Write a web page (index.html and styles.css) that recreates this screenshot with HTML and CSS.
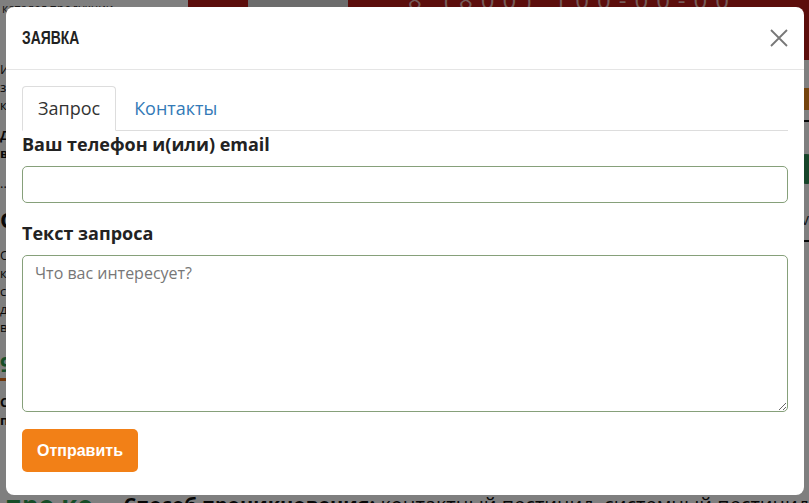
FILE: index.html
```html
<!DOCTYPE html>
<html lang="ru">
<head>
    <meta charset="UTF-8">
    <meta name="viewport" content="width=device-width, initial-scale=1.0">
    <title>Заявка</title>
    <link rel="stylesheet" href="styles.css">
</head>
<body>
    <div class="page">
        <header class="site-header">
            <div class="header-left">каталог продукции</div>
            <div class="header-red">
                <div class="header-photo"></div>
                <div class="header-phone">8 (800) 100-00-00</div>
            </div>
        </header>
        <div class="page-body">
            <aside class="sidebar">
                <p>Инсектицид для защиты зерновых культур</p>
                <p class="bold">Действующее вещество</p>
                <p>...</p>
                <p class="heading">Описание</p>
                <p>Обладает контактным и системным действием против вредителей</p>
                <p class="green">9</p>
                <p class="bold">Способ применения</p>
            </aside>
            <main class="content">
                <div class="row-orange"><span class="badge-orange">В корзину</span></div>
                <div class="row-line"></div>
                <div class="row-green"><span class="dot-green"></span></div>
                <div class="row-text">v</div>
                <div class="row-line"></div>
            </main>
        </div>
        <div class="page-foot">
            <span class="foot-green">про ко</span>
            <span class="foot-text"><b>Способ проникновения:</b> контактный пестицид, системный пестицид</span>
        </div>
    </div>

    <div class="backdrop"></div>

    <div class="modal">
        <div class="modal-header">
            <h4 class="modal-title">ЗАЯВКА</h4>
            <button class="close" type="button" aria-label="Закрыть">
                <svg width="18" height="18" viewBox="0 0 18 18">
                    <path d="M1 1 L17 17 M17 1 L1 17" stroke="#777" stroke-width="1.8" fill="none"/>
                </svg>
            </button>
        </div>
        <div class="modal-body">
            <ul class="tabs">
                <li class="tab active"><a href="#">Запрос</a></li>
                <li class="tab"><a href="#">Контакты</a></li>
            </ul>
            <form class="request-form">
                <div class="form-group">
                    <label for="contact">Ваш телефон и(или) email</label>
                    <input type="text" id="contact" class="form-control">
                </div>
                <div class="form-group">
                    <label for="message">Текст запроса</label>
                    <textarea id="message" class="form-control textarea" placeholder="Что вас интересует?"></textarea>
                </div>
                <button type="button" class="btn-send">Отправить</button>
            </form>
        </div>
    </div>
</body>
</html>
```

FILE: styles.css
```css
* {
    box-sizing: border-box;
}
body {
    margin: 0;
    font-family: "Open Sans", Arial, sans-serif;
    background-color: #ffffff;
    color: #333;
    overflow: hidden;
}

/* page behind the modal */
.page {
    height: 100vh;
    display: flex;
    flex-direction: column;
}
.site-header {
    display: flex;
    height: 60px;
}
.header-left {
    width: 188px;
    font-size: 12px;
    padding: 0 0 0 2px;
}
.header-red {
    flex: 1;
    display: flex;
    background-color: #b81c18;
}
.header-photo {
    width: 100px;
    margin-left: 60px;
    background-color: #d8d8d8;
}
.header-phone {
    color: #e8b8b4;
    font-size: 24px;
    line-height: 0;
    margin-left: 60px;
    letter-spacing: 8px;
}
.page-body {
    flex: 1;
    display: flex;
    overflow: hidden;
}
.sidebar {
    width: 120px;
    font-size: 13px;
    color: #111;
}
.sidebar p {
    margin: 0 0 12px;
}
.sidebar .bold {
    font-weight: bold;
}
.sidebar .heading {
    font-size: 22px;
    font-weight: bold;
}
.sidebar .green {
    color: #2d9b4f;
    font-size: 22px;
    font-weight: bold;
    border-bottom: 3px solid #e0701a;
}
.content {
    flex: 1;
    padding-top: 28px;
}
.row-orange {
    display: flex;
    justify-content: flex-end;
}
.badge-orange {
    background-color: #e8861a;
    color: #fff;
    padding: 2px 8px;
    font-size: 13px;
    line-height: 18px;
}
.row-line {
    height: 2px;
    background-color: #111;
    margin: 10px 0;
}
.row-green {
    display: flex;
    justify-content: flex-end;
    margin-top: 32px;
}
.dot-green {
    width: 30px;
    height: 30px;
    border-radius: 15px;
    background-color: #2e8a55;
    margin-right: -12px;
}
.row-text {
    text-align: right;
    font-size: 16px;
    margin-top: 24px;
}
.page-foot {
    height: 20px;
    display: flex;
    gap: 30px;
    padding-left: 5px;
    white-space: nowrap;
}
.foot-green {
    color: #2d9b4f;
    font-size: 26px;
    font-weight: bold;
    line-height: 44px;
}
.foot-text {
    color: #111;
    font-size: 20px;
    line-height: 44px;
}

/* modal */
.backdrop {
    position: fixed;
    inset: 0;
    background-color: rgba(0, 0, 0, 0.5);
}
.modal {
    position: fixed;
    left: 6px;
    top: 7px;
    width: 798px;
    background-color: #ffffff;
    border-radius: 8px;
}
.modal-header {
    height: 63px;
    display: flex;
    align-items: center;
    justify-content: space-between;
    padding: 0 16px;
    border-bottom: 1px solid #e5e5e5;
}
.modal-title {
    display: inline-block;
    margin: 0;
    font-family: "Liberation Sans", Arial, sans-serif;
    font-size: 19px;
    font-weight: bold;
    color: #222;
    transform: scaleX(0.73);
    transform-origin: left center;
}
.close {
    border: none;
    background: none;
    padding: 0;
    width: 18px;
    height: 18px;
    cursor: pointer;
}
.close svg {
    display: block;
}
.modal-body {
    padding: 16px 16px 23px;
}
.tabs {
    list-style: none;
    margin: 0;
    padding: 0;
    display: flex;
    border-bottom: 1px solid #dddddd;
}
.tab {
    margin-bottom: -1px;
    margin-right: 2px;
}
.tab a {
    display: block;
    padding: 10px 15px;
    font-size: 18px;
    line-height: 23px;
    color: #337ab7;
    text-decoration: none;
    border: 1px solid transparent;
    border-radius: 4px 4px 0 0;
}
.tab.active a {
    color: #333;
    border-color: #dddddd;
    border-bottom-color: #ffffff;
}
.form-group {
    margin-bottom: 17px;
}
.form-group label {
    display: block;
    font-size: 18px;
    font-weight: bold;
    line-height: 27px;
    margin-bottom: 8px;
    color: #222;
}
.form-control {
    display: block;
    width: 100%;
    height: 37px;
    border: 1px solid #86a07a;
    border-radius: 5px;
    padding: 6px 12px;
    font-family: "Open Sans", Arial, sans-serif;
    font-size: 16px;
}
.textarea {
    height: 157px;
    resize: vertical;
}
.textarea::placeholder {
    color: #777;
}
.btn-send {
    display: block;
    height: 43px;
    padding: 0 15px;
    border: none;
    border-radius: 5px;
    background-color: #f28017;
    color: #ffffff;
    font-family: "Liberation Sans", Arial, sans-serif;
    font-size: 16px;
    font-weight: bold;
    cursor: pointer;
}
```
